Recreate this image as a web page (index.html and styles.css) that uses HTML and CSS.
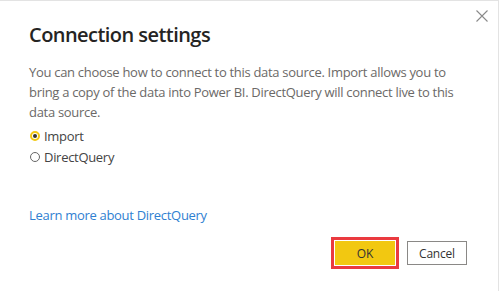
FILE: index.html
```html
<!DOCTYPE html>
<html lang="en">
<head>
<meta charset="utf-8">
<title>Connection settings</title>
<link rel="stylesheet" href="styles.css">
</head>
<body>
<div class="dialog">
  <button class="close" aria-label="Close">
    <svg width="12" height="12" viewBox="0 0 12 12"><path d="M0.5 0.5 L11.5 11.5 M11.5 0.5 L0.5 11.5" stroke="#8a8a8a" stroke-width="1.1" fill="none"/></svg>
  </button>
  <h1 class="title">Connection settings</h1>
  <p class="desc">You can choose how to connect to this data source. Import allows you to bring a copy of the data into Power BI. DirectQuery will connect live to this data source.</p>
  <div class="options">
    <label class="option"><span class="radio checked"></span>Import</label>
    <label class="option"><span class="radio"></span>DirectQuery</label>
  </div>
  <a class="link" href="#">Learn more about DirectQuery</a>
  <div class="actions">
    <button class="btn primary">OK</button>
    <button class="btn secondary">Cancel</button>
  </div>
</div>
</body>
</html>
```
FILE: styles.css
```css
* { box-sizing: border-box; }
html, body { margin: 0; padding: 0; background: #fff; }
.dialog {
  position: relative;
  width: 499px;
  height: 291px;
  border-top: 1px solid #e3e3e3;
  border-right: 1px solid #e3e3e3;
  padding: 0 31px 0 29px;
  display: flex;
  flex-direction: column;
  font-family: "Open Sans", "Noto Sans", sans-serif;
  color: #605e5c;
}
.close {
  position: absolute;
  top: 9px;
  right: 10px;
  width: 12px;
  height: 12px;
  padding: 0;
  border: 0;
  background: none;
  display: flex;
}
.title {
  margin: 20px 0 0;
  font-size: 20px;
  line-height: 28px;
  font-weight: 600;
  color: #252423;
  letter-spacing: -0.55px;
}
.desc {
  margin: 13px 0 0;
  font-size: 13px;
  line-height: 20px;
  color: #6b6967;
  letter-spacing: -0.3px;
}
.options {
  margin-top: 3px;
  display: flex;
  flex-direction: column;
}
.option {
  display: flex;
  align-items: center;
  height: 21px;
  font-size: 13px;
  color: #444;
  letter-spacing: -0.3px;
}
.radio {
  width: 10px;
  height: 10px;
  border-radius: 50%;
  border: 1px solid #666;
  margin: 0 4px 0 1px;
  display: flex;
  align-items: center;
  justify-content: center;
}
.radio.checked {
  border: 2px solid #f2c811;
}
.radio.checked::after {
  content: "";
  width: 4px;
  height: 4px;
  border-radius: 50%;
  background: #333;
}
.link {
  margin-top: 38px;
  font-size: 13px;
  line-height: 20px;
  color: #2f80d1;
  text-decoration: none;
  align-self: flex-start;
  letter-spacing: -0.3px;
}
.actions {
  margin-top: 16px;
  display: flex;
  justify-content: flex-end;
  gap: 12px;
}
.btn {
  width: 60px;
  height: 24px;
  font-family: "Open Sans", "Noto Sans", sans-serif;
  font-size: 12px;
  letter-spacing: -0.2px;
  padding: 0;
  color: #333;
}
.primary {
  background: #f2c811;
  border: 0;
  box-shadow: 0 0 0 1px #fff, 0 0 0 4px #ea3a3f;
}
.secondary {
  background: #fff;
  border: 1px solid #8a8886;
}
```
